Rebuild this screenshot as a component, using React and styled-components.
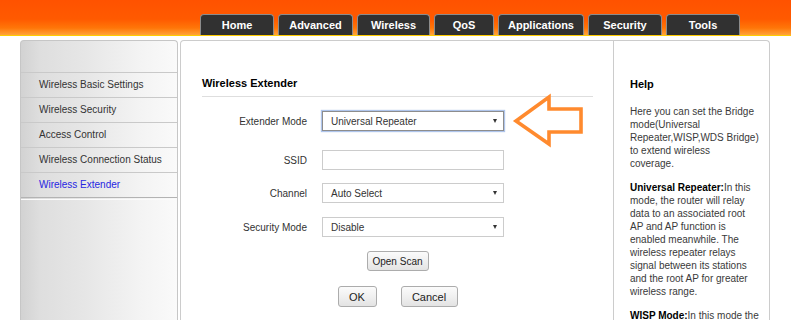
import React from 'react';
import styled, { createGlobalStyle } from 'styled-components';

const Global = createGlobalStyle`
  html, body { margin: 0; padding: 0; background: #fff; }
  body {
    font-family: "Liberation Sans", Arial, sans-serif;
    font-size: 10px;
    color: #333;
  }
  * { box-sizing: border-box; }
`;

const Page = styled.div`
  position: relative;
  width: 791px;
  height: 320px;
  overflow: hidden;
`;

const Header = styled.header`
  height: 36px;
  border-bottom: 1px solid #ffcc00;
  background: linear-gradient(to bottom, #ff5200 0%, #ff5a00 55%, #ff7608 80%, #ffa43a 100%);
  display: flex;
  align-items: flex-end;
  padding-left: 200px;
`;

const Tabs = styled.nav`
  display: flex;
  gap: 4px;
`;

const Tab = styled.a`
  width: ${p => p.$w}px;
  height: 21px;
  display: flex;
  align-items: center;
  justify-content: center;
  background: #313131;
  border: 1px solid #8c8c8c;
  border-bottom: none;
  border-radius: 4px 4px 0 0;
  color: #fff;
  font-weight: bold;
  font-size: 11px;
  text-decoration: none;
`;

const Body = styled.div`
  display: flex;
  gap: 2px;
  margin: 4px 0 0 20px;
`;

const Sidebar = styled.aside`
  width: 158px;
  height: 300px;
  border: 1px solid #c6c6c6;
  border-bottom: none;
  border-radius: 4px 4px 0 0;
  background: linear-gradient(to right, #d2d2d2 0%, #dedede 12%, #e6e6e6 40%, #f3f3f3 75%, #fafafa 100%);
`;

const SideTop = styled.div`
  height: 31px;
`;

const MenuItem = styled.div`
  height: 25px;
  line-height: 24px;
  border-top: 1px solid #c9c9c9;
  padding-left: 18px;
  color: ${p => (p.$active ? '#2626e2' : '#333')};
  white-space: nowrap;
`;

const MenuEnd = styled.div`
  height: 3px;
  border-top: 1px solid #b3b3b3;
  border-bottom: 1px solid #fbfbfb;
`;

const Main = styled.main`
  width: 590px;
  height: 300px;
  display: flex;
  border: 1px solid #cccccc;
  border-bottom: none;
  border-radius: 4px 4px 0 0;
  background: #fff;
`;

const Content = styled.section`
  width: 432px;
  padding: 35px 20px 0 21px;
`;

const Title = styled.h2`
  margin: 0;
  font-size: 11px;
  line-height: 14px;
  font-weight: bold;
  color: #000;
  padding-bottom: 6px;
  border-bottom: 1px solid #dedede;
`;

const Form = styled.div`
  margin-top: 14px;
  display: flex;
  flex-direction: column;
`;

const Row = styled.div`
  display: grid;
  grid-template-columns: 105px 182px;
  column-gap: 15px;
  align-items: center;
  height: 20px;
  margin-bottom: ${p => p.$mb}px;
`;

const Label = styled.label`
  text-align: right;
  color: #333;
  white-space: nowrap;
`;

const Field = styled.div`
  height: 20px;
  border: 1px solid ${p => (p.$focus ? '#8d8d8d' : '#cccccc')};
  box-shadow: ${p => (p.$focus ? '0 0 1px 1px rgba(110,150,220,0.55)' : 'none')};
  background: #fff;
  display: flex;
  align-items: center;
  justify-content: space-between;
  padding: 0 6px 0 8px;
  color: #333;
`;

const Caret = styled.span`
  width: 0;
  height: 0;
  border-left: 2.5px solid transparent;
  border-right: 2.5px solid transparent;
  border-top: 4px solid #333;
`;

const ButtonRow = styled.div`
  display: flex;
  justify-content: center;
  gap: ${p => p.$gap || 0}px;
  margin-bottom: ${p => p.$mb || 0}px;
`;

const Button = styled.button`
  width: ${p => p.$w}px;
  height: ${p => p.$h}px;
  padding: 0;
  border: 1px solid #acacac;
  border-radius: 3px;
  background: linear-gradient(to bottom, #fbfbfb 0%, #f0f0f0 50%, #e3e3e3 100%);
  font-family: "Liberation Sans", Arial, sans-serif;
  font-size: ${p => p.$fs}px;
  color: #222;
`;

const Help = styled.aside`
  width: 156px;
  border-left: 1px solid #cccccc;
  padding: 36px 12px 0 16px;
`;

const HelpTitle = styled.h3`
  margin: 0 0 14px;
  font-size: 11px;
  line-height: 14px;
  font-weight: bold;
  color: #000;
`;

const HelpText = styled.p`
  margin: 0 0 11px;
  line-height: 13px;
  color: #3a3a3a;
  white-space: nowrap;
  b { color: #000; }
`;

const Arrow = styled.svg`
  position: absolute;
  left: 510px;
  top: 91px;
`;

const tabs = [
  ['Home', 74],
  ['Advanced', 75],
  ['Wireless', 73],
  ['QoS', 60],
  ['Applications', 86],
  ['Security', 74],
  ['Tools', 74],
];

const menu = [
  'Wireless Basic Settings',
  'Wireless Security',
  'Access Control',
  'Wireless Connection Status',
  'Wireless Extender',
];

export default function App() {
  return (
    <Page>
      <Global />
      <Header>
        <Tabs>
          {tabs.map(([t, w]) => (
            <Tab key={t} $w={w}>{t}</Tab>
          ))}
        </Tabs>
      </Header>
      <Body>
        <Sidebar>
          <SideTop />
          {menu.map(m => (
            <MenuItem key={m} $active={m === 'Wireless Extender'}>{m}</MenuItem>
          ))}
          <MenuEnd />
        </Sidebar>
        <Main>
          <Content>
            <Title>Wireless Extender</Title>
            <Form>
              <Row $mb={19}>
                <Label>Extender Mode</Label>
                <Field $focus>Universal Repeater<Caret /></Field>
              </Row>
              <Row $mb={13}>
                <Label>SSID</Label>
                <Field />
              </Row>
              <Row $mb={14}>
                <Label>Channel</Label>
                <Field>Auto Select<Caret /></Field>
              </Row>
              <Row $mb={14}>
                <Label>Security Mode</Label>
                <Field>Disable<Caret /></Field>
              </Row>
              <ButtonRow $mb={15}>
                <Button $w={62} $h={20} $fs={10}>Open Scan</Button>
              </ButtonRow>
              <ButtonRow $gap={24}>
                <Button $w={39} $h={21} $fs={11}>OK</Button>
                <Button $w={57} $h={21} $fs={11}>Cancel</Button>
              </ButtonRow>
            </Form>
          </Content>
          <Help>
            <HelpTitle>Help</HelpTitle>
            <HelpText>
              Here you can set the Bridge<br />
              mode(Universal<br />
              Repeater,WISP,WDS Bridge)<br />
              to extend wireless<br />
              coverage.
            </HelpText>
            <HelpText>
              <b>Universal Repeater:</b>In this<br />
              mode, the router will relay<br />
              data to an associated root<br />
              AP and AP function is<br />
              enabled meanwhile. The<br />
              wireless repeater relays<br />
              signal between its stations<br />
              and the root AP for greater<br />
              wireless range.
            </HelpText>
            <HelpText>
              <b>WISP Mode:</b>In this mode the
            </HelpText>
          </Help>
        </Main>
      </Body>
      <Arrow width="76" height="58" viewBox="510 91 76 58">
        <polygon
          points="516,121 549,97 549,109 581,109 581,132 549,132 549,144"
          fill="none"
          stroke="#ff8a2e"
          strokeWidth="3.6"
          strokeLinejoin="miter"
        />
      </Arrow>
    </Page>
  );
}
